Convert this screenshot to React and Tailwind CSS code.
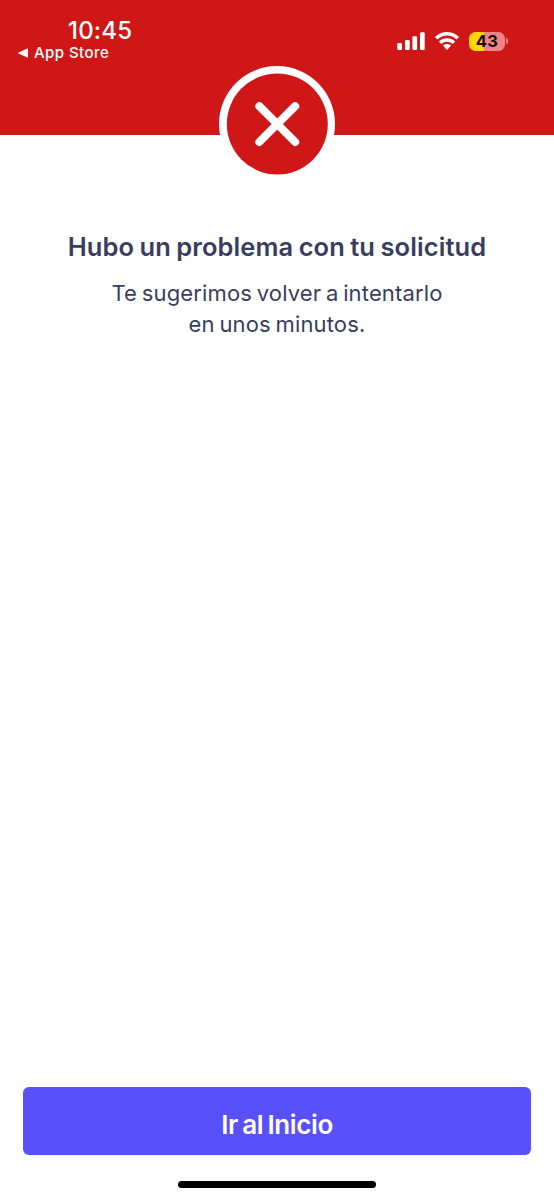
function StatusBar() {
  return (
    <div className="flex h-[66px] justify-between text-white">
      <div className="flex flex-col pt-[17px]">
        <span className="ml-[68px] h-7 whitespace-nowrap text-[24px] leading-7 font-medium tracking-[0.2px]">10:45</span>
        <div className="ml-[18px] flex h-[15px] items-center gap-[6px]">
          <svg width="10" height="10" viewBox="0 0 10 10" fill="currentColor" aria-hidden="true">
            <path d="M0.6 4.5 9.3.4Q10 .1 10 .8V9.2Q10 9.9 9.3 9.6L.6 5.5Q-.3 5 .6 4.5Z" />
          </svg>
          <span className="whitespace-nowrap pt-px text-[15px] leading-[14px] font-medium tracking-[0.45px]">App Store</span>
        </div>
      </div>
      <div className="mt-[31px] mr-[46px] flex h-5 items-center">
        <svg width="28" height="20" viewBox="0 0 28 20" fill="currentColor" aria-hidden="true">
          <rect x="0.3" y="12" width="4.7" height="7" rx="1.3" />
          <rect x="8" y="9" width="4.7" height="10" rx="1.3" />
          <rect x="15.4" y="5.3" width="4.7" height="13.7" rx="1.3" />
          <rect x="23" y="1.3" width="4.7" height="17.7" rx="1.3" />
        </svg>
        <svg className="ml-[10px]" width="24" height="20" viewBox="0 0 24 20" aria-hidden="true">
          <g fill="none" stroke="currentColor" strokeWidth="3.5">
            <path d="M1.2 7.3C7.4 1.2 16.6 1.2 22.8 7.3" />
            <path d="M5.1 11.8C9 8.1 15 8.1 18.9 11.8" />
          </g>
          <path d="M8 14.6C10.4 12.6 13.6 12.6 16 14.6L12.5 18.4Q12 18.9 11.5 18.4Z" fill="currentColor" />
        </svg>
        <div className="ml-[10px] flex items-center gap-px">
          <div className="flex h-[19px] w-[36px] items-center justify-center rounded-[6.5px] bg-[linear-gradient(to_right,#ffd60a_15px,#ee8488_15px)] text-[16.5px] leading-[19px] font-bold tracking-[0.3px] text-[#160909]">43</div>
          <div className="h-[6px] w-[2px] rounded-r-full bg-[#ee8488]" />
        </div>
      </div>
    </div>
  );
}

function ErrorBadge() {
  return (
    <svg className="mx-auto block shrink-0" width="116" height="116" viewBox="0 0 116 116" role="img" aria-label="Error">
      <circle cx="58" cy="58" r="58" fill="#fff" />
      <circle cx="58.3" cy="58" r="50.5" fill="#cf1717" />
      <path d="M40.3 40.2 76.2 76M76.2 40.2 40.3 76" stroke="#fff" strokeWidth="8" strokeLinecap="round" />
    </svg>
  );
}

export default function App() {
  return (
    <main className="flex h-[1200px] w-[554px] flex-col overflow-hidden bg-white font-['Inter',sans-serif] text-[#393e60]">
      <header className="h-[135px] shrink-0 bg-[#cf1717]">
        <StatusBar />
        <ErrorBadge />
      </header>
      <section className="mt-[96px] text-center">
        <h1 className="whitespace-nowrap text-[25.5px] leading-8 font-semibold tracking-[0.1px] [word-spacing:-1.2px]">Hubo un problema con tu solicitud</h1>
        <p className="mt-[15px] whitespace-nowrap text-[22px] leading-[31px] tracking-[0.14px] [word-spacing:-1.6px]">
          Te sugerimos volver a intentarlo
          <br />
          en unos minutos.
        </p>
      </section>
      <footer className="mt-auto flex flex-col items-center px-[23px] pb-[12px]">
        <button className="flex h-[68px] w-full items-center justify-center rounded-[6px] bg-[#5950f9] pt-[7px] text-[26px] leading-8 font-semibold tracking-[-0.4px] text-white [word-spacing:-1.8px]">Ir al Inicio</button>
        <div className="mt-[26px] h-[7px] w-[198px] rounded-full bg-black" />
      </footer>
    </main>
  );
}
